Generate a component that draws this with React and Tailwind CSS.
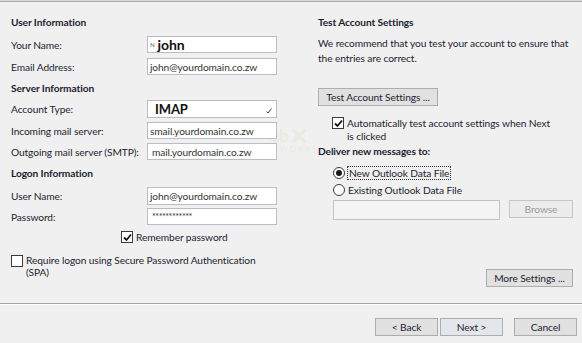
import React from 'react';

const Field = ({ label, children, h = 'h-[17px]', mt }) => (
  <div className={`flex items-center ${mt}`}>
    <span className="w-[136px] shrink-0 whitespace-nowrap">{label}</span>
    <div className={`w-[130px] ${h} bg-white border border-[#b9bcc2] flex items-center px-[2px] overflow-hidden whitespace-nowrap`}>
      {children}
    </div>
  </div>
);

const Check = ({ checked }) => (
  <span className="w-[12px] h-[12px] shrink-0 bg-white border border-[#3a3a3a] flex items-center justify-center">
    {checked && (
      <svg width="9" height="9" viewBox="0 0 9 9">
        <path d="M1 4.5 L3.5 7 L8 1.5" fill="none" stroke="#111" strokeWidth="1.8" />
      </svg>
    )}
  </span>
);

const Radio = ({ selected }) => (
  <span className="w-[12px] h-[12px] shrink-0 rounded-full bg-white border border-[#3a3a3a] flex items-center justify-center">
    {selected && <span className="w-[6px] h-[6px] rounded-full bg-[#1a1a1a]" />}
  </span>
);

const Button = ({ children, className = '' }) => (
  <div className={`h-[18px] bg-[#e1e1e1] border border-[#adadad] flex items-center justify-center whitespace-nowrap ${className}`}>
    {children}
  </div>
);

export default function App() {
  return (
    <div className="relative w-[582px] h-[343px] bg-[#f0f0f0] flex flex-col overflow-hidden font-['Lato',sans-serif] text-[10.2px] tracking-[-0.1px] leading-[16px] text-[#1d1d30]">
      <div className="h-px bg-[#dcdcdc]" />
      <div className="h-px bg-[#a9a9a9]" />

      {/* faint watermark, behind the form */}
      <div className="absolute left-[258px] top-[126px] flex flex-col items-center pointer-events-none text-[#e9ebdc]">
        <div className="flex items-center gap-[2px] text-[17px] leading-[19px] font-bold">
          <span>eb</span>
          <svg width="16" height="16" viewBox="0 0 18 18">
            <path d="M2 2 L16 16 M16 2 L2 16" stroke="#e9ebdc" strokeWidth="3" />
          </svg>
        </div>
        <div className="text-[8px] leading-[9px] tracking-[2px]">NETWORKS</div>
      </div>

      <div className="relative flex h-[301px]">
        {/* left column */}
        <div className="w-[318px] shrink-0 pl-[11px] pt-[12px] flex flex-col">
          <div className="font-bold h-[16px]">User Information</div>
          <Field label="Your Name:" mt="mt-[6px]">
            <span className="text-[6px] leading-none text-[#555] mr-[3px]">N</span>
            <span className="font-bold text-[14px] leading-none text-[#111]">john</span>
          </Field>
          <Field label="Email Address:" mt="mt-[5px]">
            <span className="text-[#333]">john@yourdomain.co.zw</span>
          </Field>
          <div className="font-bold h-[16px] mt-[5px]">Server Information</div>
          <Field label="Account Type:" h="h-[18px]" mt="mt-[4px]">
            <span className="font-bold text-[13px] leading-none ml-[5px] text-[#111] flex-1">IMAP</span>
            <svg width="6" height="6" viewBox="0 0 6 6" className="self-end mb-[3px] mr-[2px]">
              <path d="M0.5 3.5 L2 5 L5.5 0.5" fill="none" stroke="#444" strokeWidth="1" />
            </svg>
          </Field>
          <Field label="Incoming mail server:" mt="mt-[4px]">
            <span className="text-[#333]">smail.yourdomain.co.zw</span>
          </Field>
          <Field label="Outgoing mail server (SMTP):" mt="mt-[4px]">
            <span className="text-[#333] ml-[2px]">mail.yourdomain.co.zw</span>
          </Field>
          <div className="font-bold h-[16px] mt-[5px]">Logon Information</div>
          <Field label="User Name:" h="h-[18px]" mt="mt-[6px]">
            <span className="text-[#333]">john@yourdomain.co.zw</span>
          </Field>
          <Field label="Password:" mt="mt-[3px]">
            <span className="text-[#333] text-[9px] tracking-[-0.5px] ml-[2px]">************</span>
          </Field>
          <div className="flex items-center gap-[3px] ml-[110px] mt-[6px] h-[12px]">
            <Check checked />
            <span>Remember password</span>
          </div>
          <div className="flex items-start gap-[3px] mt-[11px]">
            <span className="mt-[1px]"><Check /></span>
            <span className="leading-[12px]">
              Require logon using Secure Password Authentication
              <br />
              (SPA)
            </span>
          </div>
        </div>

        {/* right column */}
        <div className="flex-1 min-w-0 pt-[12px] pr-[9px] flex flex-col">
          <div className="font-bold h-[16px]">Test Account Settings</div>
          <p className="mt-[6px] leading-[15px] whitespace-nowrap">
            We recommend that you test your account to ensure that
            <br />
            the entries are correct.
          </p>
          <Button className="w-[120px] mt-[22px]">Test Account Settings ...</Button>
          <div className="flex items-start gap-[3px] ml-[14px] mt-[11px]">
            <Check checked />
            <span className="leading-[13px] whitespace-nowrap">
              Automatically test account settings when Next
              <br />
              is clicked
            </span>
          </div>
          <div className="font-bold h-[16px]">Deliver new messages to:</div>
          <div className="flex items-center gap-[2px] ml-[15px] mt-[7px] h-[14px]">
            <Radio selected />
            <span className="border border-dotted border-[#333] px-px leading-[12px]">New Outlook Data File</span>
          </div>
          <div className="flex items-center gap-[3px] ml-[15px] mt-[3px] h-[14px]">
            <Radio />
            <span>Existing Outlook Data File</span>
          </div>
          <div className="flex items-start ml-[15px] mt-[3px]">
            <div className="w-[167px] h-[20px] bg-[#f4f4f4] border border-[#c3c3c3]" />
            <div className="w-[64px] h-[18px] ml-[9px] bg-[#ececec] border border-[#c6c6c6] text-[#9a9a9a] flex items-center justify-center">
              Browse
            </div>
          </div>
          <div className="flex justify-end mt-[49px]">
            <Button className="w-[87px]">More Settings ...</Button>
          </div>
        </div>
      </div>

      <div className="h-px bg-[#a3a3a3]" />
      <div className="h-px bg-white" />

      <div className="flex justify-end pt-[13px] pr-[5px]">
        <Button className="w-[63px]">&lt; Back</Button>
        <Button className="w-[63px] ml-[2px] border-[#5b9fe3] bg-[#e3e6ea]">Next &gt;</Button>
        <Button className="w-[63px] ml-[11px]">Cancel</Button>
      </div>
    </div>
  );
}
